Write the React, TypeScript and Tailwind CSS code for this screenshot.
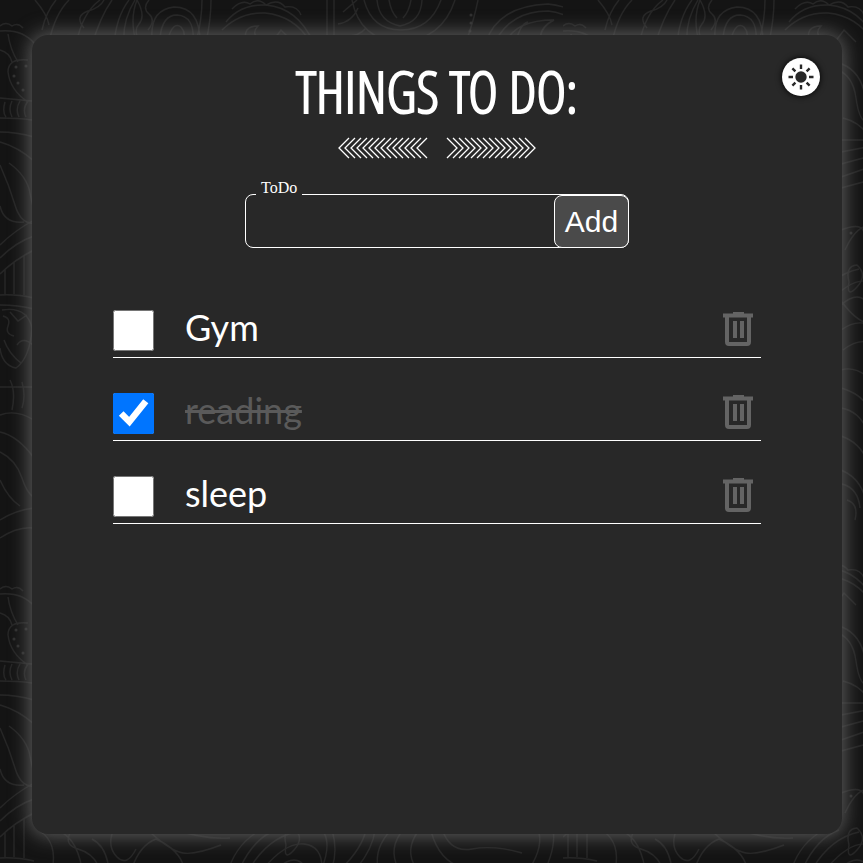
import { useState } from "react";
import type { FormEvent } from "react";

type Task = { id: number; text: string; done: boolean };

const initialTasks: Task[] = [
  { id: 1, text: "Gym", done: false },
  { id: 2, text: "reading", done: true },
  { id: 3, text: "sleep", done: false },
];

const chevrons = Array.from({ length: 14 }, (_, i) => i * 6);

function Backdrop() {
  return (
    <svg className="absolute inset-0 h-full w-full" aria-hidden="true">
      <defs>
        <pattern id="paisley" width="563" height="563" patternUnits="userSpaceOnUse">
          <rect width="563" height="563" fill="#141414" />
          <g fill="none" stroke="#262626" strokeWidth="1.4">
            {/* left edge leaves, seeds and ribs */}
            <path d="M0 26q6-5 12 0q6-4 11 2M0 31q22-2 34 12M0 50q10 3 12 12M8 34q2 15 10 28M8 72q0-14 20-12M8 72q2 18 20 30M0 98l32 3M5 102q-3 10 1 15M12 101q-4 8 0 16M20 101q-5 8-1 16M28 101q-6 8-2 16M0 118q20 0 32 2M0 132q16 0 34 5M0 142q18 5 34 19M9 163q18 13 21 30t10 34M0 165q9 20 15 40t20 18M0 206q4 18 24 16M0 245q14-14 34-25M0 258q16-16 34-22M0 274q14-14 34-24M5 270v24M14 262v32M24 255v40M0 295q16-1 34 3M0 305q18 0 34 4" />
            <path d="M2 310q25-4 30 18q-2 30-16 40q-14-3-16-20M3 316q8 2 5 10t6 10M10 312l8 9l9-6M17 345q6-9 16 0M4 340q5 14 17 23M0 387h34M10 380q6 12 2 30M22 382q4 14 0 26M0 415q16-6 34 5M0 432q18 4 34 26M0 452q16 8 22 26t14 20M0 480q8 18 20 26M0 520q16-10 34-12M0 538q18-12 34-10" />
            {/* top band of arcs and petals */}
            <path d="M35 0q12 14 14 25M42 30q4-18 14-30M49 42q6-28 20-42M76 45q6-32 24-45M84 28q-10-12 4-17q12-3 16-11M92 45q8-28 20-45M114 45q2-28 15-45M124 45q-2-24 11-45M137 45q-8-25 0-45q9 16 2 24t3 21M149 0q-7 8 0 14t-1 16M152 38q-2-28 22-31q26 0 26 35M160 38q2-23 17-23q18 1 16 27M168 39q5-18 13-12q7 8-1 18M202 0q0 20-6 42M211 0q0 20-5 42M222 30q18-18 43-17q30 3 45 29M226 22q14-18 40-17q32 3 47 37M232 9q10-10 18-5q8-7 16 1q12-7 19 2q12-2 16 8M246 42q-4-16 12-16q-7 7 1 14M272 42l9-12l12 12M327 42V0M334 42V0M343 12l14-12M338 24q14-2 20-16M340 36q18 2 26-8M352 0q8 40 48 42q42-2 55-42M364 0q8 30 37 30t40-30M377 0q2 22 23 26q21-4 22-26M389 0q2 12 8 18M411 0q-2 12-8 18M466 42q8-22 12-42M486 42q12-36 62-38q38 4 65 38M495 42q16-31 53-31q32 4 50 31M506 42q10-22 48-22q-16 8-13 22M516 42q4-18 12-20" />
            {/* lower band, visible beneath the card */}
            <path d="M40 268q18 12 12 40M52 266q24 4 30 40M70 270q-6 12 8 16t20 16M92 276q12 6 16 24M113 268q-6 16 4 26t19-8M132 305q8-23 24-29q24 11 28 29M151 270q20 18 32 20t38-8M170 265q34 12 60 10M229 305q9-26 32-38M240 305q14-30 36-38M250 305q18-30 46-36M264 305q22-26 40-24t18 24M278 305q18-16 28 0M322 305q10-26 0-38M332 305q6-18 0-38M342 305q20-20 24-38M357 305q16-20 18-38M378 305q-4-20 13-38M398 305q-10-20 5-38M416 305q-12-18 3-38M431 268q8 30 32 37M442 266q8 24 30 20t50 4M530 305q14-23 8-38M546 305q10-23 7-38" />
            {/* right edge reads at the second horizontal tile */}
            <path d="M275 70q15 6 18 28t10 24M279 64q19 8 23 32M280 118q16 4 24 16M278 140h26M278 152l26-5M278 164l26-7M278 177l26-9M278 188l26-7M278 230q18-7 22 0t4 20M282 250q10-22 22-24M286 282q-4-16 8-17q11 10 0 22t-8-5M279 302q14 19 26 21M278 330q14-10 26-6M280 350q13-10 24-8M278 370q12-4 26 6M278 388q20 6 26 18M278 408q18 3 26 22M278 436q18 6 26 24M278 470q24 10 26 40M279 484q16 4 18 24M284 500q12 4 8 20" />
          </g>
          <g fill="#303030">
            <circle cx="16" cy="67" r="1.5" /><circle cx="26" cy="66" r="1.5" />
            <circle cx="14" cy="76" r="1.5" /><circle cx="18" cy="83" r="1.5" />
            <circle cx="23" cy="90" r="1.5" /><circle cx="288" cy="233" r="1.5" />
            <circle cx="471" cy="15" r="1.5" /><circle cx="471" cy="23" r="1.5" />
            <circle cx="470" cy="31" r="1.5" />
          </g>
        </pattern>
      </defs>
      <rect width="100%" height="100%" fill="url(#paisley)" />
    </svg>
  );
}

function Flourish() {
  return (
    <svg className="mt-[6px] h-[22px] w-[200px]" viewBox="0 0 200 22" fill="none" stroke="white" strokeWidth="1.3" aria-hidden="true">
      {chevrons.map((x) => (
        <g key={x}>
          <path d={`M${x + 12} 1L${x + 2} 11L${x + 12} 21`} />
          <path d={`M${188 - x} 1L${198 - x} 11L${188 - x} 21`} />
        </g>
      ))}
    </svg>
  );
}

function TrashIcon() {
  return (
    <svg className="h-9 w-8" viewBox="0 0 32 36" aria-hidden="true">
      <path d="M11 1h11v2h9v3H1V3h10z" fill="#646464" />
      <path d="M5 6v25q0 2 2 2h18q2 0 2-2V6" fill="none" stroke="#646464" strokeWidth="4" />
      <path d="M11 10h4v17h-4zM18 10h4v17h-4z" fill="#646464" />
      <path d="M1 4.5h30" stroke="#646464" strokeWidth="4" />
    </svg>
  );
}

function SunIcon() {
  return (
    <svg className="h-7 w-7" viewBox="0 0 28 28" aria-hidden="true">
      <circle cx="14" cy="14" r="5.7" fill="#282828" />
      <path d="M14 1.5v4.5M14 22v4.5M1.5 14H6M22 14h4.5M5.4 5.4l3 3M19.6 19.6l3 3M5.4 22.6l3-3M19.6 8.4l3-3" stroke="#282828" strokeWidth="2.4" />
    </svg>
  );
}

export default function App() {
  const [tasks, setTasks] = useState(initialTasks);
  const [draft, setDraft] = useState("");

  const add = (event: FormEvent) => {
    event.preventDefault();
    if (!draft.trim()) return;
    setTasks([...tasks, { id: Date.now(), text: draft.trim(), done: false }]);
    setDraft("");
  };
  const toggle = (id: number) =>
    setTasks(tasks.map((t) => (t.id === id ? { ...t, done: !t.done } : t)));

  return (
    <div className="relative flex min-h-screen bg-[#141414] pt-[35px] pr-[21px] pb-[29px] pl-8 text-white">
      <Backdrop />
      <main className="relative flex grow flex-col items-center rounded-2xl bg-[#282828] px-[81px] pt-4 shadow-[0_0_20px_2px_#606060]">
        <button
          type="button"
          aria-label="Light mode"
          className="absolute top-[23px] right-[22px] flex size-[38px] items-center justify-center rounded-full bg-white shadow-[0_0_6px_#000000]"
        >
          <SunIcon />
        </button>

        <h1 className="font-['Open_Sans_Condensed_Light','Open_Sans_Condensed','Liberation_Sans_Narrow',sans-serif] text-[57px] leading-[80px] font-light whitespace-nowrap [-webkit-text-stroke:2px_white]">
          THINGS TO DO:
        </h1>
        <Flourish />

        <form onSubmit={add} className="mt-[21px] w-96 max-w-full">
          <fieldset className="flex min-w-0 rounded-lg border border-white">
            <legend className="ml-[10px] h-7 px-[5px] font-['Liberation_Serif',serif] text-base leading-4">
              <label htmlFor="todo">ToDo</label>
            </legend>
            <input
              id="todo"
              type="text"
              value={draft}
              onChange={(e) => setDraft(e.target.value)}
              className="-mt-3 min-w-0 grow bg-transparent px-3 font-['Liberation_Sans',sans-serif] text-3xl outline-none"
            />
            <button
              type="submit"
              className="-mt-[13px] -mr-px -mb-px h-[53px] w-[75px] shrink-0 rounded-lg border border-white bg-[#4a4a4a] font-['Liberation_Sans',sans-serif] text-3xl"
            >
              Add
            </button>
          </fieldset>
        </form>

        <ul className="mt-[27px] w-full">
          {tasks.map((task) => (
            <li key={task.id} className="flex h-[83px] items-end border-b border-white pb-[6px]">
              <input
                id={`task-${task.id}`}
                type="checkbox"
                checked={task.done}
                onChange={() => toggle(task.id)}
                className="size-[41px] shrink-0"
              />
              <label
                htmlFor={`task-${task.id}`}
                className={`ml-[31px] grow font-['Lato',sans-serif] text-4xl leading-[48px] ${
                  task.done ? "text-[#5a5a5a] line-through" : "text-white"
                }`}
              >
                {task.text}
              </label>
              <button
                type="button"
                aria-label={`Delete ${task.text}`}
                onClick={() => setTasks(tasks.filter((t) => t.id !== task.id))}
                className="mr-[7px] mb-1"
              >
                <TrashIcon />
              </button>
            </li>
          ))}
        </ul>
      </main>
    </div>
  );
}
